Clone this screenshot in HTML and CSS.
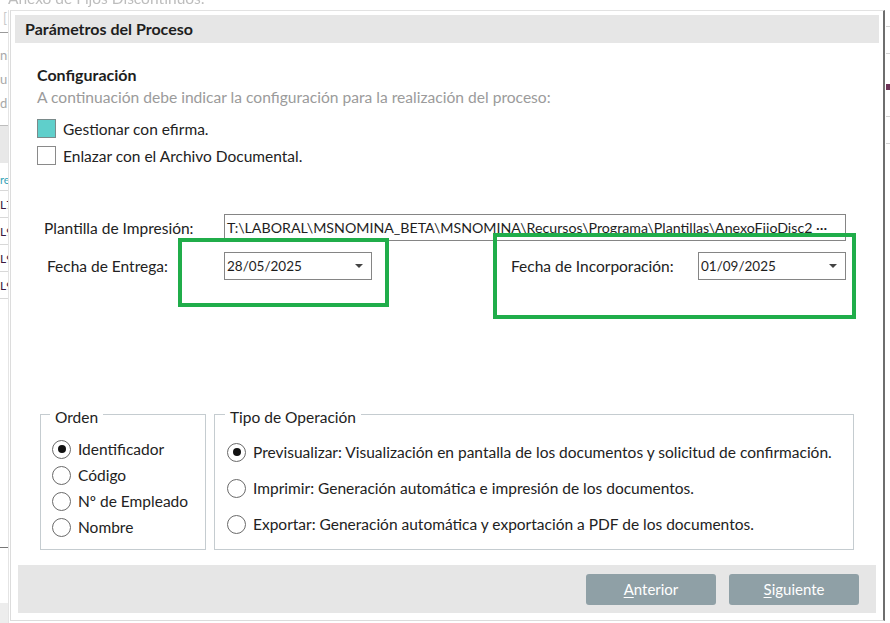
FILE: index.html
```html
<!DOCTYPE html>
<html lang="es">
<head>
<meta charset="utf-8">
<title>Parámetros del Proceso</title>
<link rel="stylesheet" href="styles.css">
</head>
<body>
<div class="desk">
  <div class="backwin">
    <div class="back-title">Anexo de Fijos Discontinuos:</div>
    <div class="back-side">
      <div class="bs-tab">[</div>
      <div class="bs-line"></div>
      <div class="bs-txt">ni</div>
      <div class="bs-txt">u</div>
      <div class="bs-txt">d</div>
      <div class="bs-block"></div>
      <div class="bs-teal">re</div>
      <div class="bs-row">L7</div>
      <div class="bs-row">L9</div>
      <div class="bs-row">L9</div>
      <div class="bs-row">L9</div>
      <div class="bs-gap"></div>
      <div class="bs-dash"></div>
      <div class="bs-foot"></div>
    </div>
    <div class="back-right">
      <div class="br-line"></div>
      <div class="br-line"></div>
      <div class="br-mark"></div>
      <div class="br-line"></div>
      <div class="br-line"></div>
    </div>
  </div>

  <div class="dialog">
    <div class="titlebar">Parámetros del Proceso</div>

    <div class="content">
      <div class="sec-title">Configuración</div>
      <div class="sec-sub">A continuación debe indicar la configuración para la realización del proceso:</div>

      <div class="checks">
        <label class="check"><span class="box box-on"></span>Gestionar con efirma.</label>
        <label class="check"><span class="box"></span>Enlazar con el Archivo Documental.</label>
      </div>

      <div class="form-row row-path">
        <span class="lbl">Plantilla de Impresión:</span>
        <div class="input path">T:\LABORAL\MSNOMINA_BETA\MSNOMINA\Recursos\Programa\Plantillas\AnexoFijoDisc2 ···</div>
      </div>

      <div class="form-row row-dates">
        <span class="lbl lbl-in">Fecha de Entrega:</span>
        <div class="input date"><span>28/05/2025</span><span class="caret"></span></div>
        <span class="lbl lbl2">Fecha de Incorporación:</span>
        <div class="input date"><span>01/09/2025</span><span class="caret"></span></div>
      </div>

      <div class="groups">
        <fieldset class="grp grp-orden">
          <legend>Orden</legend>
          <div class="radio on"><span class="circ"></span>Identificador</div>
          <div class="radio"><span class="circ"></span>Código</div>
          <div class="radio"><span class="circ"></span>Nº de Empleado</div>
          <div class="radio"><span class="circ"></span>Nombre</div>
        </fieldset>
        <fieldset class="grp grp-tipo">
          <legend>Tipo de Operación</legend>
          <div class="radio on"><span class="circ"></span>Previsualizar: Visualización en pantalla de los documentos y solicitud de confirmación.</div>
          <div class="radio"><span class="circ"></span>Imprimir: Generación automática e impresión de los documentos.</div>
          <div class="radio"><span class="circ"></span>Exportar: Generación automática y exportación a PDF de los documentos.</div>
        </fieldset>
      </div>
    </div>

    <div class="buttonbar">
      <button class="btn"><u>A</u>nterior</button>
      <button class="btn"><u>S</u>iguiente</button>
    </div>

    <div class="mark mark-1"></div>
    <div class="mark mark-2"></div>
  </div>
</div>
</body>
</html>
```

FILE: styles.css
```css
* { box-sizing: border-box; }

html, body {
  margin: 0;
  padding: 0;
  width: 890px;
  height: 623px;
  overflow: hidden;
  background: #ffffff;
  font-family: Lato, "Noto Sans", "DejaVu Sans", sans-serif;
  color: #222;
}

.desk {
  position: relative;
  width: 890px;
  height: 623px;
  overflow: hidden;
}

/* background window behind the dialog */
.backwin {
  position: absolute;
  inset: 0;
}

.back-title {
  position: absolute;
  left: 8px;
  top: -11px;
  font-size: 15.5px;
  color: #bdbdbd;
  filter: blur(0.6px);
}

.back-side {
  position: absolute;
  left: 0;
  top: 10px;
  width: 9px;
  height: 613px;
  overflow: hidden;
  border-right: 1px solid #e4e4e4;
  display: flex;
  flex-direction: column;
  font-size: 13px;
}

.bs-tab { height: 22px; color: #c9c9c9; padding-left: 3px; }
.bs-line { height: 1px; background: #9a9a9a; margin-bottom: 10px; }
.bs-txt { height: 24px; color: #a8a8a8; line-height: 24px; }
.bs-block { height: 38px; margin-top: 10px; background: #e8e8e8; border-top: 1px solid #bdbdbd; }
.bs-teal { height: 28px; line-height: 34px; color: #33a3b8; font-size: 11px; border-bottom: 1px solid #d8d8d8; }
.bs-row { height: 27px; line-height: 27px; color: #3a1840; font-size: 12px; border-bottom: 1px solid #d8d8d8; }
.bs-gap { flex: 1; }
.bs-dash { height: 1px; background: #777; margin-bottom: 55px; width: 8px; }
.bs-foot { height: 20px; background: #ededed; }

.back-right {
  position: absolute;
  left: 886px;
  top: 0;
  width: 4px;
  height: 623px;
  display: flex;
  flex-direction: column;
}
.br-line { height: 1px; background: #d4d4d4; margin-top: 26px; }
.br-mark { height: 6px; background: #6d3356; margin-top: 30px; }

/* dialog */
.dialog {
  position: absolute;
  left: 10px;
  top: 10px;
  width: 875px;
  height: 611px;
  background: #ffffff;
  border-top: 1px solid #e2e2e2;
  border-left: 1px solid #dcdcdc;
  border-bottom: 1px solid #dcdcdc;
  border-right: 2px solid #6e6e6e;
  display: flex;
  flex-direction: column;
}

.titlebar {
  margin: 4px 4px 0 4px;
  height: 28px;
  background: #e6e6e6;
  padding-left: 10px;
  font-weight: 700;
  font-size: 16px;
  line-height: 28px;
  color: #1e1e1e;
}

.content {
  flex: 1;
  padding-left: 26px;
  display: flex;
  flex-direction: column;
}

.sec-title {
  margin-top: 22px;
  font-weight: 700;
  font-size: 16px;
  line-height: 19px;
  color: #1e1e1e;
}

.sec-sub {
  margin-top: 4px;
  font-size: 15.6px;
  line-height: 19px;
  color: #9b9b9b;
}

.checks {
  margin-top: 12px;
  display: flex;
  flex-direction: column;
  gap: 8px;
}

.check {
  display: flex;
  align-items: center;
  height: 19px;
  font-size: 15.5px;
  color: #222;
}

.box {
  width: 19px;
  height: 19px;
  border: 1.5px solid #8a8a8a;
  background: #fff;
  margin-right: 7px;
  flex: none;
}
.box-on { background: #5fcfcb; border-color: #7a8a8a; }

.form-row {
  display: flex;
  align-items: center;
  padding-left: 7px;
}

.row-path { margin-top: 49px; }
.row-dates { margin-top: 11px; }

.lbl {
  width: 180px;
  flex: none;
  font-size: 15.5px;
  color: #222;
  white-space: nowrap;
}
.lbl-in { padding-left: 3px; }
.lbl2 { margin-left: 139px; width: 187px; }

.input {
  height: 27px;
  border: 1px solid #858585;
  background: #fff;
  font-size: 14.2px;
  line-height: 25px;
  padding-left: 2px;
  color: #1e1e1e;
  white-space: nowrap;
  overflow: hidden;
}

.path { width: 622px; }

.date {
  width: 148px;
  height: 28px;
  display: flex;
  align-items: center;
  justify-content: space-between;
  padding-right: 8px;
  font-size: 13.5px;
}

.caret {
  width: 0;
  height: 0;
  border-left: 4px solid transparent;
  border-right: 4px solid transparent;
  border-top: 4px solid #444;
}

.groups {
  margin-top: 122px;
  display: flex;
  gap: 8px;
  padding-left: 3px;
}

.grp {
  margin: 0;
  padding: 0;
  border: 1px solid #c5ccd0;
  display: flex;
  flex-direction: column;
  min-width: 0;
}

.grp legend {
  margin-left: -2px;
  padding: 6px 5px 0 5px;
  font-size: 15.5px;
  line-height: 18px;
  color: #222;
}

.grp-orden {
  width: 166px;
  height: 148px;
  padding: 10px 0 0 11px;
}
.grp-tipo {
  width: 640px;
  height: 148px;
  padding: 8px 0 0 12px;
}

.radio {
  display: flex;
  align-items: center;
  font-size: 15.5px;
  color: #222;
  white-space: nowrap;
}
.grp-orden .radio { height: 26px; }
.grp-tipo .radio { height: 36px; }

.circ {
  width: 19px;
  height: 19px;
  border-radius: 50%;
  border: 1px solid #6a6a6a;
  background: #fff;
  margin-right: 7px;
  flex: none;
  display: flex;
  align-items: center;
  justify-content: center;
}
.radio.on .circ::after {
  content: "";
  width: 8px;
  height: 8px;
  border-radius: 50%;
  background: #111;
}

.buttonbar {
  margin: 0 7px 7px 7px;
  height: 48px;
  background: #e6e6e6;
  display: flex;
  justify-content: flex-end;
  align-items: center;
  gap: 13px;
  padding-right: 17px;
}

.btn {
  width: 130px;
  height: 31px;
  border: none;
  border-radius: 3px;
  background: #8fa0a6;
  color: #ffffff;
  font-family: Lato, "Noto Sans", sans-serif;
  font-size: 15px;
  padding: 0;
}
.btn u { text-underline-offset: 2px; }

/* annotation highlights */
.mark {
  position: absolute;
  border: 4px solid #20ad4a;
}
.mark-1 { left: 167px; top: 227px; width: 211px; height: 69px; }
.mark-2 { left: 482px; top: 222px; width: 363px; height: 86px; }
```
